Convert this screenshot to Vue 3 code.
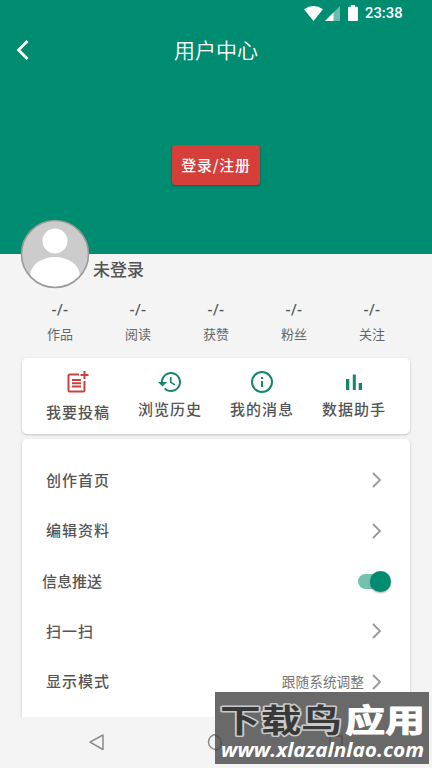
<script setup>
const stats = ['作品', '阅读', '获赞', '粉丝', '关注']
const rows = [
  { label: '创作首页' },
  { label: '编辑资料' },
  { label: '信息推送', toggle: true },
  { label: '扫一扫' },
  { label: '显示模式', value: '跟随系统调整' },
]
</script>

<template>
  <div class="screen">
    <header class="hero">
      <div class="status">
        <svg class="wifi" width="19" height="15" viewBox="0 0 19 15"><path d="M0 3.2Q9.500-3 19 3.200L9.500 15Z" fill="#fff" /></svg>
        <svg class="signal" width="15" height="15" viewBox="0 0 15 15"><path d="M0 15L15 0V15Z" fill="#fff" opacity=".42" /><path d="M0 15L8.500 6.500V15Z" fill="#fff" /></svg>
        <svg class="battery" width="10" height="16" viewBox="0 0 10 16"><path d="M3 0H7V1.800H9Q10 1.800 10 2.800V15Q10 16 9 16H1Q0 16 0 15V2.800Q0 1.800 1 1.800H3Z" fill="#fff" /></svg>
        <span class="time">23:38</span>
      </div>
      <div class="bar">
        <svg class="back" width="14" height="22" viewBox="0 0 14 22"><path d="M11.500 2L2.500 11L11.500 20" fill="none" stroke="#fff" stroke-width="2.800" /></svg>
        <h1>用户中心</h1>
      </div>
      <button class="login">登录/注册</button>
    </header>

    <section class="profile">
      <svg class="avatar" width="70" height="70" viewBox="0 0 70 70">
        <defs><clipPath id="face"><circle cx="35" cy="35" r="32.500" /></clipPath></defs>
        <circle cx="35" cy="35" r="33.500" fill="#ccc" stroke="#999" stroke-width="1.600" />
        <circle cx="35" cy="22" r="12.500" fill="#fff" />
        <ellipse cx="35" cy="57" rx="25" ry="19" fill="#fff" clip-path="url(#face)" />
      </svg>
      <span class="name">未登录</span>
    </section>

    <section class="stats">
      <div v-for="s in stats" :key="s" class="stat"><b>-/-</b><span>{{ s }}</span></div>
    </section>

    <section class="card actions">
      <div class="action post">
        <svg width="24" height="24" viewBox="0 0 24 24"><path d="M13 4.500H3.700Q2.500 4.500 2.500 5.700V20.300Q2.500 21.500 3.700 21.500H17.300Q18.500 21.500 18.500 20.300V11M18.500 1V9M14.500 5H22.500M6 10H15M6 13.300H15M6 16.600H15" fill="none" stroke="#c9423f" stroke-width="2" /></svg>
        <span>我要投稿</span>
      </div>
      <div class="action">
        <svg width="24" height="24" viewBox="0 0 24 24"><path fill="#15866c" d="M13 2c-5.500 0-10 4.500-10 10H0l4.500 4.500L9 12H5c0-4.400 3.600-8 8-8s8 3.600 8 8-3.600 8-8 8c-2.200 0-4.200-.9-5.650-2.350l-1.420 1.420C7.740 20.880 10.240 22 13 22c5.500 0 10-4.500 10-10S18.500 2 13 2zm-1 5v5.800l4.500 2.700.8-1.250-3.700-2.200V7H12z" /></svg>
        <span>浏览历史</span>
      </div>
      <div class="action">
        <svg width="24" height="24" viewBox="0 0 24 24"><g fill="none" stroke="#15866c" stroke-width="2"><circle cx="12" cy="12" r="10" /><path d="M12 11V17M12 7V9" /></g></svg>
        <span>我的消息</span>
      </div>
      <div class="action">
        <svg width="24" height="24" viewBox="0 0 24 24"><path d="M4 9H7.300V20H4ZM10.800 4.500H13.800V20H10.800ZM16.700 13H20V20H16.700Z" fill="#15866c" /></svg>
        <span>数据助手</span>
      </div>
    </section>

    <section class="card menu">
      <div v-for="r in rows" :key="r.label" class="row" :class="{ push: r.toggle }">
        <span class="label">{{ r.label }}</span>
        <span v-if="r.value" class="value">{{ r.value }}</span>
        <span v-if="r.toggle" class="toggle"><i></i></span>
        <svg v-else width="10" height="16" viewBox="0 0 10 16"><path d="M1 1L8 8L1 15" fill="none" stroke="#999" stroke-width="1.800" /></svg>
      </div>
    </section>

    <footer class="nav">
      <svg width="432" height="50" viewBox="0 0 432 50"><g fill="none" stroke="#8b8b8b" stroke-width="1.500"><path d="M103 18V32.500L90 25.200Z" stroke-linejoin="round" /><circle cx="216" cy="25" r="7.500" /></g></svg>
    </footer>

    <div class="watermark">
      <svg width="214" height="72" viewBox="0 0 214 72">
        <path d="M0 43.600A7.500 7.500 0 0 1 0 58.400M115 44H127V58H115Z" class="ghost" />
        <text x="5" y="40" textLength="122" lengthAdjust="spacingAndGlyphs" class="brand dark">下载鸟</text>
        <text x="130" y="40" textLength="80" lengthAdjust="spacingAndGlyphs" class="brand light">应用</text>
        <text x="6" y="65" textLength="203" lengthAdjust="spacingAndGlyphs" class="url">www.xlazalnlao.com</text>
      </svg>
    </div>
  </div>
</template>

<style>
body { margin: 0; }
</style>

<style scoped>
* { box-sizing: border-box; }
.screen { position: relative; width: 432px; height: 768px; overflow: hidden; display: flex; flex-direction: column; background: #f4f4f4; color: #555; font-family: "Noto Sans CJK SC", sans-serif; }
.hero { height: 254px; flex: none; background: #008c70; color: #fff; display: flex; flex-direction: column; align-items: center; }
.status { width: 100%; height: 26px; display: flex; align-items: center; padding-left: 304px; }
.signal { margin-left: 2px; }
.battery { margin-left: 8px; }
.time { margin-left: 7px; font: 500 14.800px/26px Roboto, sans-serif; }
.bar { width: 100%; height: 48px; display: grid; grid-template-columns: 60px 1fr 60px; align-items: center; }
.back { margin-left: 16px; }
h1 { margin: 0; padding-bottom: 2px; text-align: center; font-size: 21px; line-height: 30px; font-weight: 350; }
.login { margin-top: 71px; width: 88px; height: 40px; padding: 0; border: 0; border-radius: 4px; background: #d53e39; color: #fff; font: 500 15px/38px "Noto Sans CJK SC", sans-serif; letter-spacing: .7px; box-shadow: 0 1px 3px rgba(0,0,0,.3); }
.profile { height: 70px; flex: none; margin: -35px 0 0 20px; display: flex; align-items: flex-end; }
.name { margin: 0 0 8px 3px; font-size: 17px; line-height: 25px; font-weight: 500; }
.stats { display: grid; grid-template-columns: repeat(5, 1fr); height: 69px; flex: none; margin: 0 21px; padding-top: 9px; }
.stat { display: flex; flex-direction: column; align-items: center; font-size: 13px; line-height: 24px; }
.stat span { color: #666; }
.stat b { font: 500 15px/24px Roboto, sans-serif; letter-spacing: .3px; }
.card { margin: 0 22px; background: #fff; border-radius: 5px; box-shadow: 0 1px 3px rgba(0,0,0,.2); flex: none; }
.actions { height: 76px; display: grid; grid-template-columns: repeat(4, 92px); justify-content: center; padding: 12px 0 0; }
.action { display: flex; flex-direction: column; align-items: center; font-size: 15px; font-weight: 500; line-height: 22px; letter-spacing: 1px; }
.action span { margin: 4px 0 0; }
.post span { margin-top: 7px; }
.menu { margin-top: 5px; height: 278px; border-radius: 5px 5px 0 0; padding: 16px 28px 0 24px; }
.row { height: 50.400px; display: flex; align-items: center; }
.label { flex: 1; padding-bottom: 2px; font-size: 15px; font-weight: 500; letter-spacing: 1px; }
.push { margin: 0 -9px 0 -4px; }
.push .label { padding-bottom: 0; letter-spacing: 0; }
.value { padding-bottom: 2px; font-size: 13.700px; color: #777; margin-right: 8px; }
.toggle { width: 28px; height: 15px; margin: 1px 5px 0 0; display: flex; align-items: center; background: #73c2b0; border-radius: 8px; }
.toggle i { flex: none; width: 21px; height: 21px; margin-left: 12px; border-radius: 50%; background: #008c70; box-shadow: 0 1px 2px rgba(0,0,0,.35); }
.nav { height: 50px; flex: none; background: #f4f4f4; }
.watermark { position: absolute; left: 215px; top: 692px; width: 214px; height: 72px; background: #696969; }
.watermark svg, .nav svg { display: block; }
.ghost { fill: none; stroke: #505050; stroke-width: 1.500; }
.brand { font-size: 32px; line-height: 1; font-weight: 700; paint-order: stroke; stroke-linejoin: round; }
.dark { fill: #393939; stroke: #c9c9c9; stroke-width: 3px; }
.light { fill: #fff; stroke: #fff; stroke-width: 1px; }
.url { font: italic 700 20px "Open Sans", sans-serif; fill: #fff; }
</style>
